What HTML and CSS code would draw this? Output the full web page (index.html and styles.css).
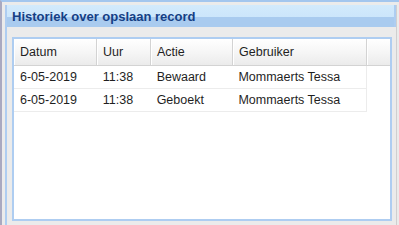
FILE: index.html
```html
<!DOCTYPE html>
<html lang="nl">
<head>
<meta charset="UTF-8" />
<title>Historiek over opslaan record</title>
<link rel="stylesheet" href="styles.css">
</head>
<body>
  <div class="window">
    <div class="panel">
      <div class="panel-title">Historiek over opslaan record</div>
      <div class="panel-body">
        <div class="grid">
          <div class="grid-header">
            <div class="hcell col-datum">Datum</div>
            <div class="hcell col-uur">Uur</div>
            <div class="hcell col-actie">Actie</div>
            <div class="hcell col-user">Gebruiker</div>
            <div class="hcell col-fill"></div>
          </div>
          <div class="grid-row">
            <div class="cell col-datum">6-05-2019</div>
            <div class="cell col-uur">11:38</div>
            <div class="cell col-actie">Bewaard</div>
            <div class="cell col-user">Mommaerts Tessa</div>
          </div>
          <div class="grid-row">
            <div class="cell col-datum">6-05-2019</div>
            <div class="cell col-uur">11:38</div>
            <div class="cell col-actie">Geboekt</div>
            <div class="cell col-user">Mommaerts Tessa</div>
          </div>
        </div>
      </div>
    </div>
  </div>
</body>
</html>
```

FILE: styles.css
```css
* {
  margin: 0;
  padding: 0;
  box-sizing: border-box;
}

html, body {
  height: 100%;
  overflow: hidden;
}

body {
  background: #ebebeb;
  font-family: "Liberation Sans", Arial, sans-serif;
  font-size: 12.5px;
  color: #1f1f1f;
}

.window {
  height: 100%;
  border-top: 2px solid #a3c6ee;
  border-left: 2px solid #a9a9c0;
  padding: 3px 2px 0 3px;
}

.panel {
  height: 100%;
  display: flex;
  flex-direction: column;
  border-left: 2px solid #aecdf1;
  border-right: 1px solid #cfcfcf;
}

.panel-title {
  height: 22px;
  padding: 2px 0 0 5px;
  line-height: 20px;
  font-weight: bold;
  font-size: 13px;
  color: #153f85;
  background: linear-gradient(#d2eafc 0, #cce6fb 54%, #a9cbef 54%, #a9cbef 100%);
  border-right: 2px solid #aecdf1;
}

.panel-body {
  flex: 1;
  padding: 10px 4px 0 5px;
}

.grid {
  height: 184px;
  background: #fff;
  border: 2px solid #aecdf1;
}

.grid-header {
  display: flex;
  height: 27px;
  background: linear-gradient(#ffffff, #f6f6f6 50%, #ebebeb);
  border-bottom: 1px solid #d3d3d3;
}

.hcell {
  line-height: 27px;
  padding-left: 6px;
  border-right: 1px solid #d3d3d3;
  box-shadow: inset 1px 0 0 #fff;
  white-space: nowrap;
}

.grid-row {
  display: flex;
  width: 353px;
  height: 23px;
  border-bottom: 1px solid #ececec;
  border-right: 1px solid #ececec;
}

.cell {
  line-height: 22px;
  padding-left: 6px;
  white-space: nowrap;
}

.col-datum { width: 83px; }
.col-uur { width: 54px; }
.col-actie { width: 82px; }
.col-user { width: 134px; }
.col-fill { flex: 1; border-right: none; }
```
